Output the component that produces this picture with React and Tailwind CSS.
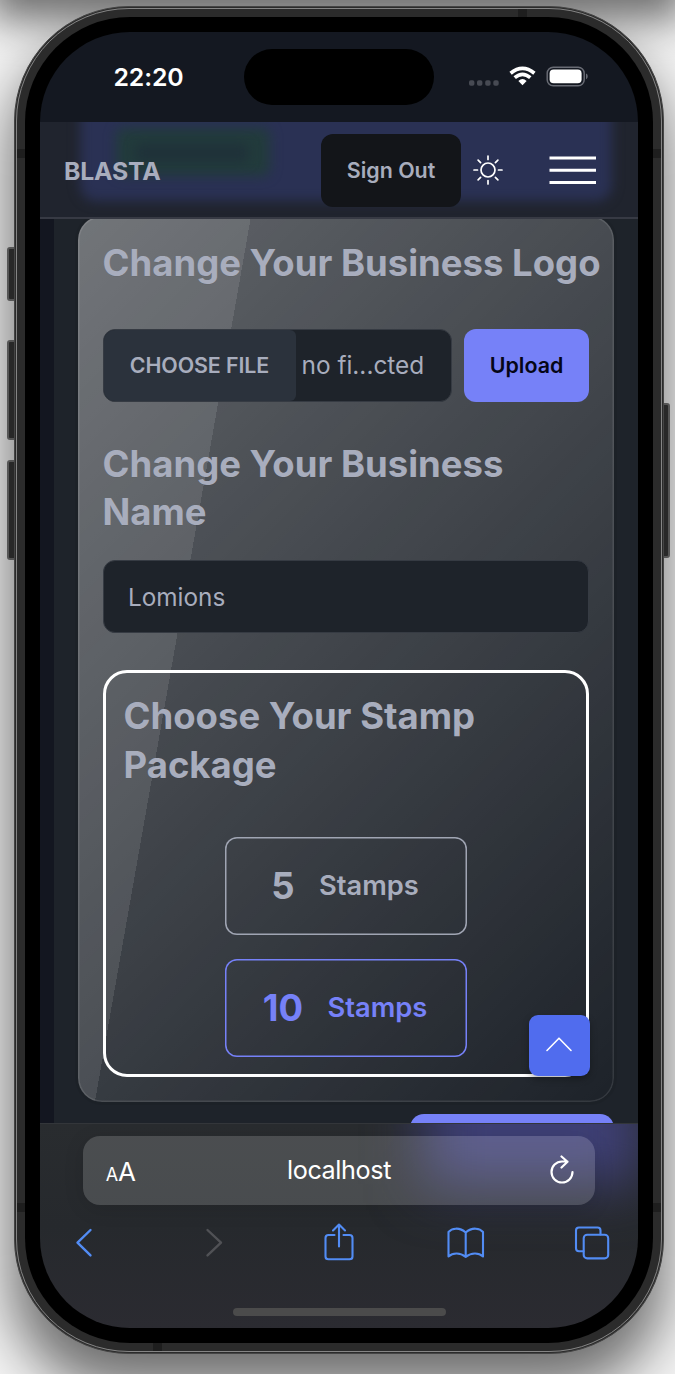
import React from "react";

function StatusBar() {
  return (
    <div className="relative flex h-[90px] shrink-0 items-start justify-between bg-[#141821] pt-[17px]">
      <div className="mt-[12px] ml-[73.500px] text-[24.800px] leading-[32px] font-semibold tracking-[-0.1px] text-white">22:20</div>
      <div className="absolute top-[17px] left-[204px] h-[56px] w-[190px] rounded-full bg-black" />
      <div className="mt-[17px] mr-[49px] flex h-[20px]">
        <svg width="122" height="22" viewBox="0 0 122 22" fill="none">
          <g fill="#474a53">
            <rect x="2" y="14.300" width="5.400" height="5.400" rx="1.8" />
            <rect x="10" y="14.300" width="5.400" height="5.400" rx="1.8" />
            <rect x="18.200" y="14.300" width="5.400" height="5.400" rx="1.8" />
            <rect x="26.300" y="14.300" width="5.400" height="5.400" rx="1.8" />
          </g>
          <g stroke="#fff" strokeWidth="3.7">
            <path d="M43.6 7.200Q55.5 -2.600 67.4 7.200" />
            <path d="M47.7 11.600Q55.5 5 63.3 11.600" />
          </g>
          <path d="M51.4 14.900Q55.5 11 59.6 14.900L55.5 19.3Z" fill="#fff" />
          <rect x="80.200" y="1.200" width="37" height="18.600" rx="6" stroke="#686b74" strokeWidth="1.5" />
          <rect x="82.6" y="3.5" width="32" height="13.8" rx="4" fill="#fff" />
          <path d="M119 7.500C121.3 8.3 121.3 12.3 119 13.3Z" fill="#686b74" />
        </svg>
      </div>
    </div>
  );
}

function NavBar() {
  return (
    <div className="relative flex h-[97px] shrink-0 items-center overflow-hidden border-b-2 border-[#373a44] bg-[#20242e]">
      <div className="absolute -top-6 left-[40px] h-[103px] w-[532px] rounded-2xl bg-[#2a3154] blur-[6px]" />
      <div className="absolute top-[6px] left-[76px] h-[48px] w-[154px] rounded-lg bg-[#223b3c] blur-[6px]" />
      <div className="absolute top-[22px] left-[96px] h-[18px] w-[112px] rounded bg-[#1f3139] blur-[6px]" />
      <div className="relative flex w-full items-center pt-px">
        <div className="ml-[24px] w-[257px] pt-[2px] text-[24.800px] leading-8 font-bold tracking-[-0.2px] text-[#a8adbd]">BLASTA</div>
        <button className="h-[73px] w-[140px] rounded-[12px] bg-[#131519] text-[21.4px] font-semibold text-[#a8adbd]">Sign Out</button>
        <svg className="ml-[12px]" width="30" height="30" viewBox="-15 -15 30 30" fill="none" stroke="#fff" strokeWidth="1.7" strokeLinecap="round">
          <circle r="7" />
          <path d="M0 -10.5V-14M0 10.5V14M-10.5 0H-14M10.5 0H14M-7.4 -7.4L-9.9 -9.9M7.4 -7.4L9.9 -9.9M-7.4 7.4L-9.9 9.9M7.4 7.4L9.9 9.9" />
        </svg>
        <svg className="ml-[45px]" width="50" height="30" viewBox="0 0 50 30" stroke="#fff" strokeWidth="3">
          <path d="M1.500 3H48M1.500 15.200H48M1.500 27.400H48" />
        </svg>
      </div>
    </div>
  );
}

function Heading({ children }) {
  return <h2 className="text-[36.5px] leading-[48.7px] font-bold whitespace-nowrap [text-shadow:0_1px_rgb(0_0_0/0.05)]">{children}</h2>;
}

function Stamp({ count, active }) {
  const tone = active ? "shadow-[inset_0_0_0_1.5px_#7681f8] text-[#7681f8]" : "shadow-[inset_0_0_0_1.5px_#a0a5b3] text-[#a8adbd]";
  return (
    <div className={"flex h-[98px] w-[242px] items-center justify-center gap-[24.500px] rounded-[12px] pr-px " + tone}>
      <span className="pt-[2px] text-[36.5px] leading-none font-bold">{count}</span>
      <span className="text-[27.3px] leading-none font-semibold">Stamps</span>
    </div>
  );
}

function Settings() {
  return (
    <div className="relative min-h-0 flex-1 overflow-hidden border-l-[14px] border-[#131620] bg-[#1e232a] pl-[24px]">
      <div className="relative -mt-[3px] h-[886px] w-[536px] rounded-[24px] bg-[linear-gradient(135deg,rgb(255_255_255/0.3)_0%,transparent_100%),linear-gradient(100deg,rgb(255_255_255/0.1)_25%,transparent_25%)] pr-[25px] pl-[24.500px] pt-[23px] text-[#a8adbd] shadow-[inset_0_0_0_1.5px_rgb(255_255_255/0.1),0_0_0_3px_rgb(0_0_0/0.05)]">
        <Heading>Change Your Business Logo</Heading>
        <div className="mt-[41px] flex gap-[12.500px]">
          <div className="flex h-[73px] w-[349.500px] items-center overflow-hidden rounded-[12px] border-[1.5px] border-[#363b43] bg-[#1e232a]">
            <div className="flex h-full w-[192px] items-center justify-center rounded-r-[6px] bg-[#2b323c] text-[21.4px] font-semibold tracking-[-0.1px]">CHOOSE FILE</div>
            <span className="ml-[6px] text-[24.4px]">no fi...cted</span>
          </div>
          <button className="h-[73px] w-[125px] rounded-[12px] bg-[#7681f8] text-[21.4px] font-semibold text-[#050617]">Upload</button>
        </div>
        <div className="mt-[38px]">
          <Heading>Change Your Business<br />Name</Heading>
        </div>
        <div className="mt-[23px] flex h-[73px] w-[486px] items-center rounded-[12px] border-[1.5px] border-[#363b43] bg-[#1e232a] pt-[2px] pl-[24.500px] text-[24.3px]">Lomions</div>
        <div className="mt-[36.500px] h-[407px] w-[486.500px] rounded-[24px] border-[3px] border-white pt-[19.500px] pl-[18px]">
          <Heading>Choose Your Stamp<br />Package</Heading>
          <div className="mt-[47px] ml-[101px] flex flex-col gap-[24px]">
            <Stamp count="5" />
            <Stamp count="10" active />
          </div>
        </div>
        <button className="absolute right-[24.500px] bottom-[26.500px] flex h-[61px] w-[61px] items-center justify-center rounded-[9px] bg-[#506cee] pb-[3px] shadow-[0_3px_7px_rgb(0_0_0/0.3)]">
          <svg width="28" height="18" viewBox="0 0 28 18" fill="none" stroke="#fff" strokeWidth="1.6" strokeLinecap="round" strokeLinejoin="round">
            <path d="M2 15.500L14 3.200L26 15.500" />
          </svg>
        </button>
      </div>
      <div className="mt-[12px] ml-[332px] h-[60px] w-[204px] rounded-[14px] bg-[#7681f8]" />
    </div>
  );
}

function BrowserBar() {
  return (
    <div className="relative h-[205px] shrink-0 overflow-hidden border-t border-[#33363a] bg-linear-to-b from-[#292c2f] via-[#26292d] to-[#2b2b31]">
      <div className="absolute -top-10 left-[385px] h-[100px] w-[215px] bg-[#40417a] blur-[28px]" />
      <div className="relative mt-[12px] ml-[43px] flex h-[69px] w-[512px] items-center rounded-[17px] bg-[rgb(255_255_255/0.16)] text-white shadow-[0_4px_20px_rgb(0_0_0/0.12)]">
        <div className="flex w-[53px] items-baseline justify-end pt-px"><span className="text-[18px]">A</span><span className="text-[26px]">A</span></div>
        <div className="w-[406px] pt-px text-center text-[25.200px] tracking-[-0.4px]">localhost</div>
        <svg className="ml-[6px]" width="28" height="32" viewBox="0 0 28 32" fill="none" stroke="#fff" strokeWidth="2.2" strokeLinecap="round" strokeLinejoin="round">
          <path d="M24.500 17A10.500 10.500 0 1 1 14 6.500H19.500M13.500 1.500L19.500 6.800L13.500 12.500" />
        </svg>
      </div>
      <svg className="relative mt-[13px]" width="598" height="48" viewBox="0 0 598 48" fill="none" stroke="#528cf4" strokeWidth="2.1" strokeLinecap="round" strokeLinejoin="round">
        <path d="M50.500 12L37.500 24.700L50.500 37.400" strokeWidth="2.4" />
        <path d="M167.500 12L181 24.700L167.500 37.400" stroke="#505155" strokeWidth="2.4" />
        <path d="M294.500 17H288.500Q285.500 17 285.500 20V38.500Q285.500 41.300 288.500 41.300H309.500Q312.500 41.300 312.500 38.500V20Q312.500 17 309.500 17H303.500M299 28.500V6.500M293 12.500L299 6.500L305 12.500" />
        <path d="M425.700 14.500C419 8.500 411.500 10.500 408.500 14V38.500C413 34.500 420 34.500 425.700 39C431.500 34.500 438.500 34.500 443 38.500V14C440 10.500 432.500 8.500 425.700 14.500V39" />
        <rect x="543.700" y="16.700" width="24.500" height="23.700" rx="3.500" />
        <path d="M543.500 33.300H539Q536 33.300 536 30.300V12.500Q536 9.500 539 9.500H557.500Q560.500 9.500 560.500 12.500V16.500" />
      </svg>
      <div className="relative mt-[41.500px] ml-[193px] h-[8px] w-[213px] rounded-full bg-[#4b4b4b]" />
    </div>
  );
}

export default function App() {
  const side = "absolute rounded-[3px] border-2 border-[#555] bg-[#282828]";
  const band = "absolute bg-[#1e1e1e]";
  return (
    <div className="relative h-[1374px] w-[675px] overflow-hidden bg-[#f4f4f4] pt-[6px] pl-[14px] font-['Inter',sans-serif]">
      <div className="absolute top-[40px] left-[10px] h-[1350px] w-[655px] rounded-[110px] bg-black/55 blur-[28px]" />
      <div className="absolute top-[-90px] left-[-10px] h-[110px] w-[695px] bg-black/55 blur-[20px]" />
      <div className={side + " top-[247px] left-[7px] h-[54px] w-[14px]"} />
      <div className={side + " top-[340px] left-[7px] h-[100px] w-[14px]"} />
      <div className={side + " top-[460px] left-[7px] h-[100px] w-[14px]"} />
      <div className={side + " top-[403px] left-[656px] h-[155px] w-[14px]"} />
      <div className="relative h-[1348px] w-[650px] rounded-[115px] border border-[#454545] bg-[#2b2b2b] p-[1px]">
        <div className="h-full w-full rounded-[113px] border-[1.5px] border-[#858585] p-[8px]">
          <div className="h-full w-full rounded-[105px] bg-black px-[15px] py-[15px]">
            <div className="flex h-[1296px] w-[598px] flex-col overflow-hidden rounded-[90px]">
              <StatusBar />
              <NavBar />
              <Settings />
              <BrowserBar />
            </div>
          </div>
        </div>
      </div>
      <div className={band + " top-[149px] left-[17px] h-[9px] w-[8px]"} />
      <div className={band + " top-[149px] left-[653px] h-[9px] w-[8px]"} />
      <div className={band + " top-[1203px] left-[17px] h-[9px] w-[8px]"} />
      <div className={band + " top-[1203px] left-[653px] h-[9px] w-[8px]"} />
      <div className={band + " top-[9px] left-[518px] h-[8px] w-[9px]"} />
      <div className={band + " top-[1343px] left-[153px] h-[8px] w-[9px]"} />
    </div>
  );
}
